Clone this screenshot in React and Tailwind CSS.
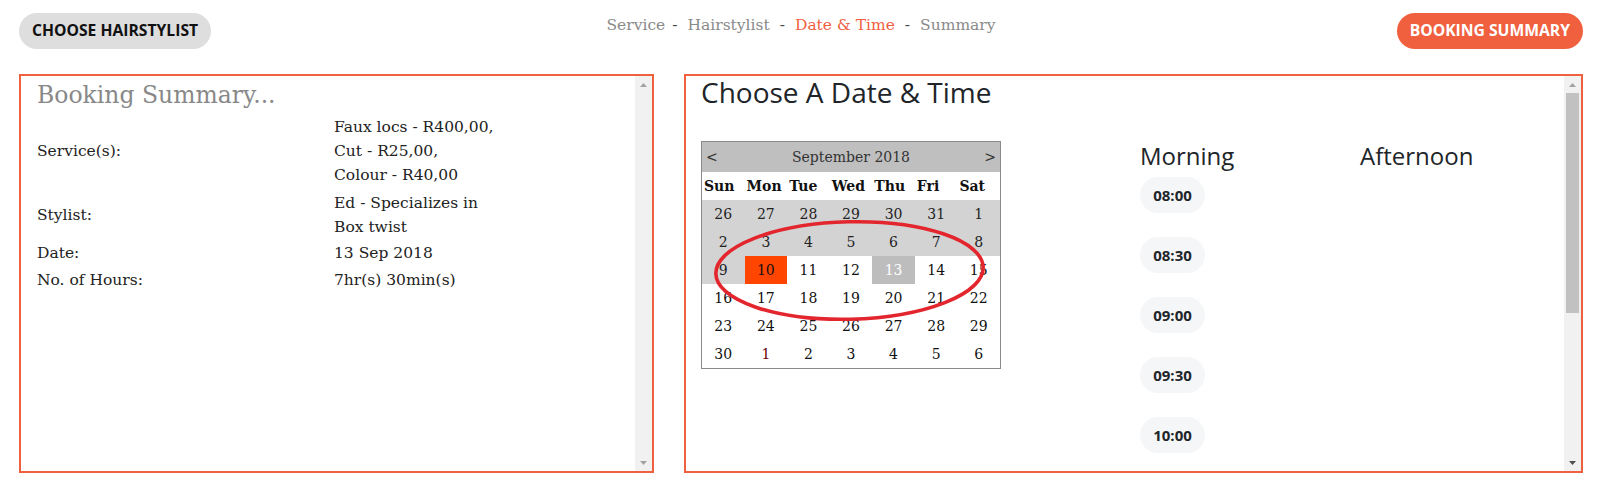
import React from 'react';

const serif = { fontFamily: '"DejaVu Serif", serif' };
const sans = { fontFamily: '"Open Sans", sans-serif' };

const weeks = [
  [['26', 'past'], ['27', 'past'], ['28', 'past'], ['29', 'past'], ['30', 'past'], ['31', 'past'], ['1', 'past']],
  [['2', 'past'], ['3', 'past'], ['4', 'past'], ['5', 'past'], ['6', 'past'], ['7', 'past'], ['8', 'past']],
  [['9', 'past'], ['10', 'today'], ['11'], ['12'], ['13', 'sel'], ['14'], ['15']],
  [['16'], ['17'], ['18'], ['19'], ['20'], ['21'], ['22']],
  [['23'], ['24'], ['25'], ['26'], ['27'], ['28'], ['29']],
  [['30'], ['1', 'red'], ['2'], ['3'], ['4'], ['5'], ['6']],
];

const dayNames = ['Sun', 'Mon', 'Tue', 'Wed', 'Thu', 'Fri', 'Sat'];
const times = ['08:00', '08:30', '09:00', '09:30', '10:00'];

function cellClass(state) {
  if (state === 'past') return 'bg-[#d3d3d3] text-[#222]';
  if (state === 'today') return 'bg-[#ff4500] text-[#111]';
  if (state === 'sel') return 'bg-[#bdbdbd] text-white';
  if (state === 'red') return 'bg-white text-[#6b0000]';
  return 'bg-white text-[#111]';
}

function Arrow({ down, color }) {
  return (
    <svg width="7" height="4" viewBox="0 0 7 4" className={down ? 'rotate-180' : ''}>
      <polygon points="0,4 3.5,0 7,4" fill={color} />
    </svg>
  );
}

function ScrollBar({ thumb, downColor }) {
  return (
    <div className="w-[17px] shrink-0 bg-[#f1f1f1] flex flex-col">
      <div className="h-[17px] flex items-center justify-center">
        <Arrow color="#a3a3a3" />
      </div>
      {thumb && <div className="h-[220px] mx-[2px] bg-[#c1c1c1]" />}
      <div className="mt-auto h-[17px] flex items-center justify-center">
        <Arrow down color={downColor} />
      </div>
    </div>
  );
}

function Calendar() {
  return (
    <div className="relative w-[300px] border border-[#8a8a8a] text-[14px]" style={serif}>
      <div className="h-[30px] bg-[#bfbfbf] flex items-center justify-between px-[4px] text-[#333]">
        <span>&lt;</span>
        <span>September 2018</span>
        <span>&gt;</span>
      </div>
      <div className="grid grid-cols-7 h-[28px] items-center bg-white font-bold text-[#111]">
        {dayNames.map((d) => (
          <div key={d} className="pl-[2px]">{d}</div>
        ))}
      </div>
      {weeks.map((week, i) => (
        <div key={i} className="grid grid-cols-7 h-[28px]">
          {week.map(([d, s], j) => (
            <div key={j} className={`flex items-center justify-center ${cellClass(s)}`}>
              {d}
            </div>
          ))}
        </div>
      ))}
      {/* red marker ring drawn over the calendar */}
      <svg
        className="absolute left-[8px] top-[74px] overflow-visible pointer-events-none"
        width="284"
        height="110"
        viewBox="0 0 284 110"
      >
        <ellipse
          cx="139.5"
          cy="54.5"
          rx="133.7"
          ry="48.7"
          fill="none"
          stroke="#e3262d"
          strokeWidth="3.6"
          transform="rotate(-1.4 139.5 54.5)"
        />
      </svg>
    </div>
  );
}

export default function App() {
  return (
    <div className="w-[1597px] h-[497px] bg-white pl-[19px] pr-[14px] pt-[13px]">
      {/* top bar */}
      <div className="grid grid-cols-[1fr_auto_1fr] items-start">
        <div>
          <button
            className="h-[36px] px-[13px] rounded-full bg-[#dedede] text-[15.7px] font-bold text-[#111]"
            style={sans}
          >
            CHOOSE HAIRSTYLIST
          </button>
        </div>
        <div className="flex mt-[2px] text-[15.5px] leading-[20px]" style={serif}>
          <span className="text-[#8a8a8a]">Service</span>
          <span className="ml-[7px] text-[#444]">-</span>
          <span className="ml-[10px] text-[#8a8a8a]">Hairstylist</span>
          <span className="ml-[10px] text-[#444]">-</span>
          <span className="ml-[10px] text-[#f0603f]">Date &amp; Time</span>
          <span className="ml-[10px] text-[#444]">-</span>
          <span className="ml-[10px] text-[#8a8a8a]">Summary</span>
        </div>
        <div className="flex justify-end">
          <button
            className="h-[36px] px-[13px] rounded-full bg-[#f0603f] text-[15.7px] font-bold text-white"
            style={sans}
          >
            BOOKING SUMMARY
          </button>
        </div>
      </div>

      {/* panels */}
      <div className="mt-[25px] flex gap-[30px]">
        <div className="w-[635px] h-[399px] border-2 border-[#f0603f] flex">
          <div className="flex-1 pl-[16px] pt-[6px] text-[#222]" style={serif}>
            <div className="text-[23.5px] leading-[27px] text-[#888]">Booking Summary...</div>
            <div className="mt-[6px] text-[15.5px] leading-[24px]">
              <div className="grid grid-cols-[297px_1fr] items-center">
                <div>Service(s):</div>
                <div>
                  <div>Faux locs - R400,00,</div>
                  <div>Cut - R25,00,</div>
                  <div>Colour - R40,00</div>
                </div>
              </div>
              <div className="grid grid-cols-[297px_1fr] items-center mt-[4px]">
                <div>Stylist:</div>
                <div>
                  <div>Ed - Specializes in</div>
                  <div>Box twist</div>
                </div>
              </div>
              <div className="grid grid-cols-[297px_1fr] items-center mt-[2px]">
                <div>Date:</div>
                <div>13 Sep 2018</div>
              </div>
              <div className="grid grid-cols-[297px_1fr] items-center mt-[3px]">
                <div>No. of Hours:</div>
                <div>7hr(s) 30min(s)</div>
              </div>
            </div>
          </div>
          <ScrollBar downColor="#a3a3a3" />
        </div>

        <div className="w-[899px] h-[399px] border-2 border-[#f0603f] flex">
          <div className="flex-1 pl-[15px] text-[#212529]" style={sans}>
            <h2 className="text-[28px] leading-[32px]">Choose A Date &amp; Time</h2>
            <div className="mt-[33px] grid grid-cols-[439px_220px_1fr]">
              <div>
                <Calendar />
              </div>
              <div>
                <div className="text-[24px] leading-[29px]">Morning</div>
                <div className="mt-[7px] flex flex-col gap-6">
                  {times.map((t) => (
                    <div
                      key={t}
                      className="h-[36px] w-[65px] rounded-full bg-[#f5f6f8] flex items-center justify-center text-[15px] font-bold"
                    >
                      {t}
                    </div>
                  ))}
                </div>
              </div>
              <div>
                <div className="text-[24px] leading-[29px]">Afternoon</div>
              </div>
            </div>
          </div>
          <ScrollBar thumb downColor="#505050" />
        </div>
      </div>
    </div>
  );
}
